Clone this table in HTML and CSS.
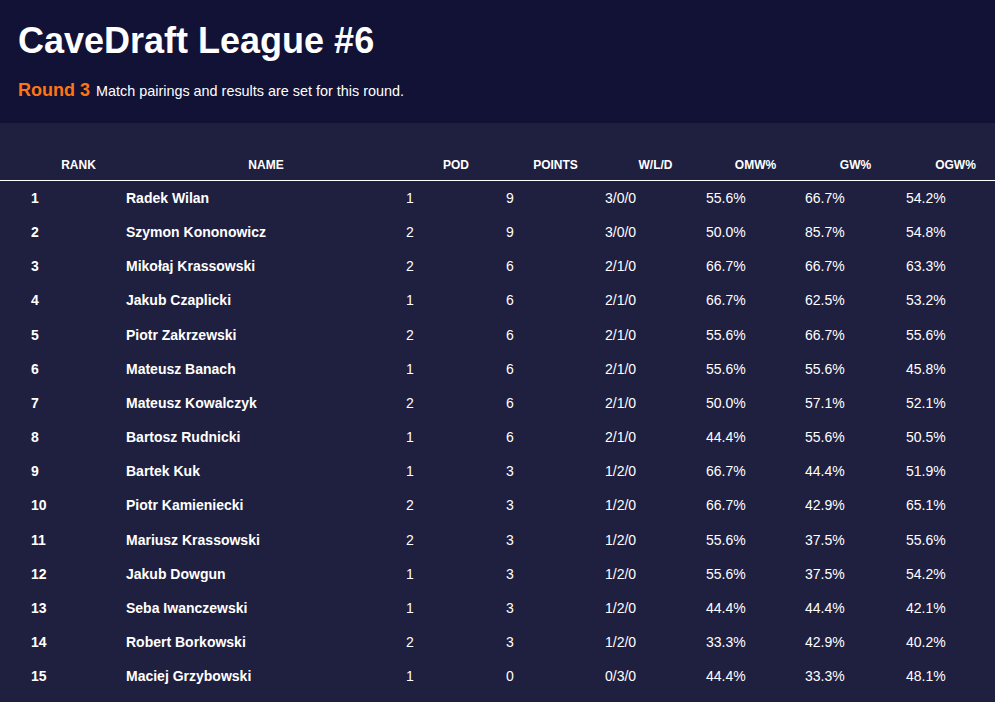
FILE: index.html
```html
<!DOCTYPE html>
<html lang="pl">
<head>
<meta charset="utf-8">
<title>CaveDraft League #6</title>
<link rel="stylesheet" href="styles.css">
</head>
<body>
<header class="top">
  <h1 class="title">CaveDraft League #6</h1>
  <p class="sub"><span class="round">Round 3</span> Match pairings and results are set for this round.</p>
</header>
<main class="content">
  <table class="standings">
    <colgroup>
      <col class="c-rank"><col class="c-name"><col class="c-pod"><col class="c-pts"><col class="c-wld"><col class="c-omw"><col class="c-gw"><col class="c-ogw">
    </colgroup>
    <thead>
      <tr><th class="rank">RANK</th><th>NAME</th><th>POD</th><th>POINTS</th><th>W/L/D</th><th>OMW%</th><th>GW%</th><th class="last">OGW%</th></tr>
    </thead>
    <tbody>
      <tr><td class="rank">1</td><td class="name">Radek Wilan</td><td>1</td><td>9</td><td>3/0/0</td><td>55.6%</td><td>66.7%</td><td>54.2%</td></tr>
      <tr><td class="rank">2</td><td class="name">Szymon Kononowicz</td><td>2</td><td>9</td><td>3/0/0</td><td>50.0%</td><td>85.7%</td><td>54.8%</td></tr>
      <tr><td class="rank">3</td><td class="name">Mikołaj Krassowski</td><td>2</td><td>6</td><td>2/1/0</td><td>66.7%</td><td>66.7%</td><td>63.3%</td></tr>
      <tr><td class="rank">4</td><td class="name">Jakub Czaplicki</td><td>1</td><td>6</td><td>2/1/0</td><td>66.7%</td><td>62.5%</td><td>53.2%</td></tr>
      <tr><td class="rank">5</td><td class="name">Piotr Zakrzewski</td><td>2</td><td>6</td><td>2/1/0</td><td>55.6%</td><td>66.7%</td><td>55.6%</td></tr>
      <tr><td class="rank">6</td><td class="name">Mateusz Banach</td><td>1</td><td>6</td><td>2/1/0</td><td>55.6%</td><td>55.6%</td><td>45.8%</td></tr>
      <tr><td class="rank">7</td><td class="name">Mateusz Kowalczyk</td><td>2</td><td>6</td><td>2/1/0</td><td>50.0%</td><td>57.1%</td><td>52.1%</td></tr>
      <tr><td class="rank">8</td><td class="name">Bartosz Rudnicki</td><td>1</td><td>6</td><td>2/1/0</td><td>44.4%</td><td>55.6%</td><td>50.5%</td></tr>
      <tr><td class="rank">9</td><td class="name">Bartek Kuk</td><td>1</td><td>3</td><td>1/2/0</td><td>66.7%</td><td>44.4%</td><td>51.9%</td></tr>
      <tr><td class="rank">10</td><td class="name">Piotr Kamieniecki</td><td>2</td><td>3</td><td>1/2/0</td><td>66.7%</td><td>42.9%</td><td>65.1%</td></tr>
      <tr><td class="rank">11</td><td class="name">Mariusz Krassowski</td><td>2</td><td>3</td><td>1/2/0</td><td>55.6%</td><td>37.5%</td><td>55.6%</td></tr>
      <tr><td class="rank">12</td><td class="name">Jakub Dowgun</td><td>1</td><td>3</td><td>1/2/0</td><td>55.6%</td><td>37.5%</td><td>54.2%</td></tr>
      <tr><td class="rank">13</td><td class="name">Seba Iwanczewski</td><td>1</td><td>3</td><td>1/2/0</td><td>44.4%</td><td>44.4%</td><td>42.1%</td></tr>
      <tr><td class="rank">14</td><td class="name">Robert Borkowski</td><td>2</td><td>3</td><td>1/2/0</td><td>33.3%</td><td>42.9%</td><td>40.2%</td></tr>
      <tr><td class="rank">15</td><td class="name">Maciej Grzybowski</td><td>1</td><td>0</td><td>0/3/0</td><td>44.4%</td><td>33.3%</td><td>48.1%</td></tr>
    </tbody>
  </table>
</main>
</body>
</html>
```

FILE: styles.css
```css
html, body {
  margin: 0;
  padding: 0;
  background: #1f1f3f;
  color: #ffffff;
  font-family: "Liberation Sans", Arial, sans-serif;
  overflow: hidden;
}

.top {
  background: #121236;
  padding: 20px 18px 21px;
}

.title {
  margin: 0;
  font-size: 36px;
  font-weight: bold;
  line-height: 41px;
}

.sub {
  margin: 19px 0 0;
  font-size: 14.4px;
  line-height: 21px;
}

.round {
  color: #ff7514;
  font-size: 18px;
  font-weight: bold;
  margin-right: 2px;
}

.content {
  padding-top: 28px;
}

.standings {
  width: 995px;
  border-collapse: collapse;
  table-layout: fixed;
}

.c-rank { width: 126px; }
.c-name { width: 280px; }
.c-pod { width: 100px; }
.c-pts { width: 99px; }
.c-wld { width: 101px; }
.c-omw { width: 99px; }
.c-gw { width: 101px; }
.c-ogw { width: 89px; }

.standings th {
  font-size: 12px;
  font-weight: bold;
  line-height: 14px;
  padding: 7px 0 8px;
  text-align: center;
  border-bottom: 1px solid #ffffff;
}

.standings th.last {
  padding-left: 10px;
}

.standings td {
  font-size: 14px;
  line-height: 16.15px;
  padding: 9px 0;
  text-align: left;
  white-space: nowrap;
}

.standings .rank {
  padding-left: 31px;
}

.standings td.rank,
.standings td.name {
  font-weight: bold;
}
```
